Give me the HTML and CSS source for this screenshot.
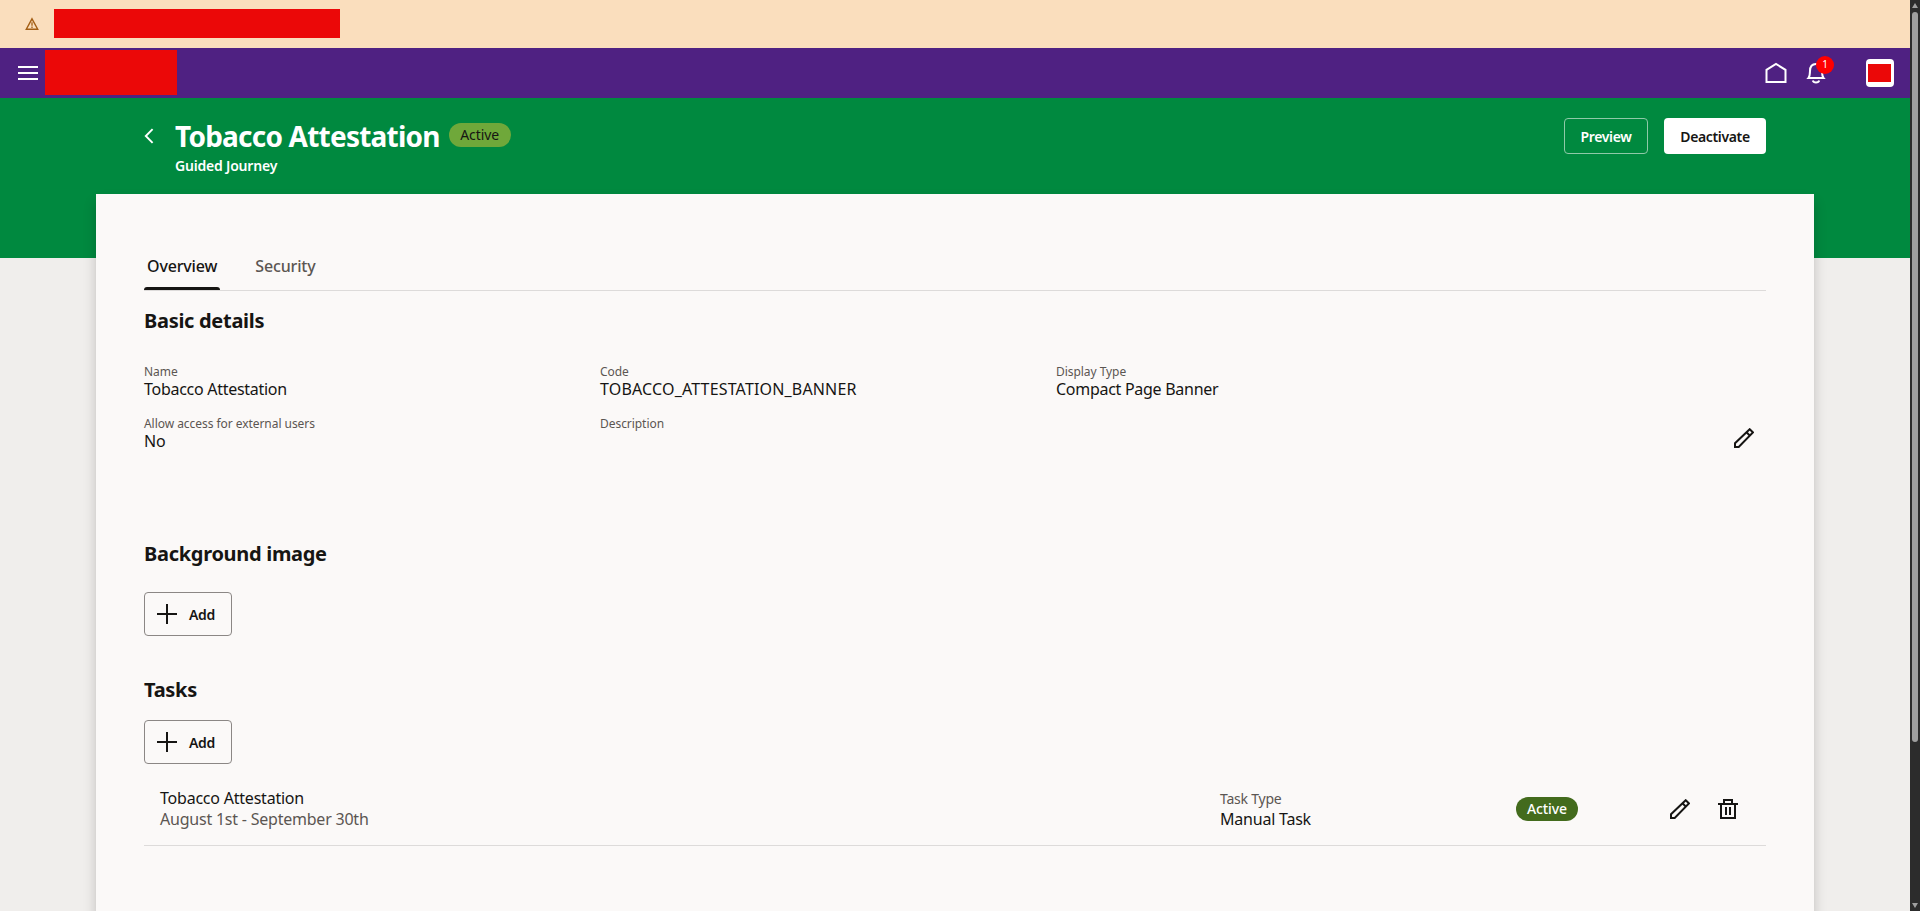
FILE: index.html
```html
<!DOCTYPE html>
<html lang="en">
<head>
  <meta charset="UTF-8" />
  <meta name="viewport" content="width=device-width, initial-scale=1.0"/>
  <title>Tobacco Attestation</title>
  <link rel="stylesheet" href="styles.css">
</head>
<body>

  <div class="app">
    <div class="alert-bar">
      <svg class="alert-icon" width="14" height="14" viewBox="0 0 14 14"><path d="M7 1.8L12.7 12.2H1.3z" fill="none" stroke="#a35e14" stroke-width="1.4"/><path d="M7 5.3v3.5M7 9.6v1.4" stroke="#a35e14" stroke-width="1.3"/></svg>
      <div class="alert-text"></div>
    </div>

    <div class="top-bar">
      <svg class="menu-icon" width="20" height="14" viewBox="0 0 20 14"><path d="M0 1h20M0 7h20M0 13h20" stroke="#fff" stroke-width="2"/></svg>
      <div class="brand"></div>
      <div class="top-actions">
        <svg width="22" height="22" viewBox="0 0 22 22"><path d="M1.500 20V7.800L11 2l9.500 5.800V20z" fill="none" stroke="#fff" stroke-width="2"/></svg>
        <div class="bell">
          <svg width="20" height="22" viewBox="0 0 20 22"><path d="M2.400 16C4 14 4 12 4 9c0-4.500 2.500-7 6-7s6 2.500 6 7c0 3 0 5 1.600 7z" fill="none" stroke="#fff" stroke-width="2"/><path d="M6.800 18.500c.8 2.700 5.600 2.700 6.400 0" fill="none" stroke="#fff" stroke-width="2"/></svg>
          <span class="count">1</span>
        </div>
        <div class="avatar"><div></div></div>
      </div>
    </div>

    <div class="page-header">
      <svg class="back" width="10" height="16" viewBox="0 0 10 16"><path d="M8.600 1.200L1.800 8l6.800 6.800" fill="none" stroke="#fff" stroke-width="1.900"/></svg>
      <div class="heading">
        <div class="title-row">
          <h1>Tobacco Attestation</h1>
          <span class="badge badge-light">Active</span>
        </div>
        <p class="subtitle">Guided Journey</p>
      </div>
      <div class="header-buttons">
        <button class="btn-outline">Preview</button>
        <button class="btn-solid">Deactivate</button>
      </div>
    </div>

    <div class="card">
      <div class="tabs">
        <div class="tab active">Overview</div>
        <div class="tab">Security</div>
      </div>

      <h2 class="details-title">Basic details</h2>
      <div class="details">
        <div class="field">
          <label>Name</label>
          <p>Tobacco Attestation</p>
        </div>
        <div class="field">
          <label>Code</label>
          <p class="code">TOBACCO_ATTESTATION_BANNER</p>
        </div>
        <div class="field">
          <label>Display Type</label>
          <p>Compact Page Banner</p>
        </div>
        <div class="field">
          <label>Allow access for external users</label>
          <p>No</p>
        </div>
        <div class="field">
          <label>Description</label>
          <p></p>
        </div>
        <div class="field edit">
          <svg width="20" height="20" viewBox="0 0 20 20"><path d="M1 19v-3.700L15.700 1.200l3.200 3.200L4.700 19zM12.500 4.300l3.200 3.200" fill="none" stroke="#161513" stroke-width="2"/></svg>
        </div>
      </div>

      <h2 class="image-title">Background image</h2>
      <button class="btn-add">
        <svg width="20" height="20" viewBox="0 0 20 20"><path d="M10 0v20M0 10h20" stroke="#161513" stroke-width="2"/></svg>
        Add
      </button>

      <h2 class="tasks-title">Tasks</h2>
      <button class="btn-add">
        <svg width="20" height="20" viewBox="0 0 20 20"><path d="M10 0v20M0 10h20" stroke="#161513" stroke-width="2"/></svg>
        Add
      </button>

      <div class="task">
        <div class="task-name">
          <p>Tobacco Attestation</p>
          <p class="muted">August 1st - September 30th</p>
        </div>
        <div class="task-type">
          <p class="muted small">Task Type</p>
          <p>Manual Task</p>
        </div>
        <span class="badge badge-dark">Active</span>
        <div class="task-actions">
          <svg width="20" height="20" viewBox="0 0 20 20"><path d="M1 19v-3.700L15.700 1.200l3.200 3.200L4.700 19zM12.500 4.300l3.200 3.200" fill="none" stroke="#161513" stroke-width="2"/></svg>
          <svg width="20" height="20" viewBox="0 0 20 20"><path d="M0 5h20M6 5V1h8v4M3 5v14h14V5M8 8v8M12 8v8" fill="none" stroke="#161513" stroke-width="2"/></svg>
        </div>
      </div>
    </div>
  </div>

  <div class="scrollbar">
    <svg width="6" height="5" viewBox="0 0 6 5"><path d="M3 0l3 5H0z" fill="#9f9f9f"/></svg>
    <div class="thumb"></div>
    <svg width="6" height="5" viewBox="0 0 6 5"><path d="M3 5l3-5H0z" fill="#9f9f9f"/></svg>
  </div>

</body>
</html>
```

FILE: styles.css
```css
* {
  box-sizing: border-box;
}

body {
  margin: 0;
  height: 911px;
  display: flex;
  overflow: hidden;
  background-color: #f0eeec;
  color: #161513;
  font-family: "Noto Sans", "Open Sans", sans-serif;
  font-size: 16px;
}

h1, h2, p {
  margin: 0;
}

svg {
  display: block;
  flex: none;
}

.app {
  flex: 1;
}

.alert-bar {
  display: flex;
  height: 48px;
  padding-left: 25px;
  background-color: #fadebd;
}

.alert-icon {
  margin-top: 17px;
}

.alert-text {
  width: 286px;
  height: 29px;
  margin: 9px 0 0 15px;
  background-color: #eb0808;
}

.top-bar {
  display: flex;
  align-items: center;
  height: 50px;
  padding: 0 16px 0 18px;
  background-color: #4f2182;
}

.brand {
  width: 132px;
  height: 45px;
  margin: 0 0 1px 7px;
  background-color: #eb0808;
}

.top-actions {
  display: flex;
  align-items: center;
  margin-left: auto;
}

.bell {
  position: relative;
  margin-left: 19px;
}

.count {
  position: absolute;
  left: 10px;
  top: -6px;
  width: 18px;
  height: 18px;
  border-radius: 50%;
  background-color: #f00;
  color: #fff;
  font-size: 10px;
  line-height: 17px;
  text-align: center;
}

.avatar {
  width: 28px;
  height: 28px;
  margin-left: 40px;
  padding: 5px 3px 5px 2px;
  border-radius: 4px;
  background-color: #fff;
}

.avatar div {
  height: 18px;
  background-color: #eb0808;
}

.page-header {
  display: flex;
  height: 160px;
  padding: 0 144px;
  background-color: #00893f;
  color: #fff;
}

.back {
  margin-top: 30px;
}

.heading {
  margin: 20px 0 0 21px;
}

.title-row {
  display: flex;
  align-items: center;
  gap: 9px;
}

h1 {
  font-size: 28px;
  font-weight: 700;
  line-height: 36px;
  letter-spacing: -0.78px;
}

.subtitle {
  font-size: 14px;
  font-weight: 600;
  line-height: 20px;
  letter-spacing: -0.2px;
  margin-top: 2px;
}

.badge {
  width: 62px;
  height: 24px;
  border-radius: 12px;
  font-size: 14px;
  line-height: 24px;
  letter-spacing: -0.1px;
  text-align: center;
}

.badge-light {
  margin-bottom: 2px;
  background-color: #6fa83a;
  color: #161513;
}

.badge-dark {
  background-color: #436b1d;
  color: #fff;
  font-weight: 500;
}

.header-buttons {
  display: flex;
  gap: 16px;
  margin: 20px 0 0 auto;
}

button {
  height: 36px;
  padding: 0;
  border-radius: 4px;
  font-family: inherit;
  font-size: 14px;
  font-weight: 600;
  letter-spacing: -0.35px;
  cursor: pointer;
}

.btn-outline {
  width: 84px;
  border: 1px solid #8fc9a8;
  background: none;
  color: #fff;
}

.btn-solid {
  width: 102px;
  border: none;
  background-color: #fff;
  color: #161513;
}

.card {
  width: 1718px;
  height: 720px;
  margin: -64px 96px 0;
  padding: 48px 48px 0;
  position: relative;
  background-color: #fbf9f8;
  box-shadow: 0 8px 12px rgba(0, 0, 0, 0.2);
}

.tabs {
  display: flex;
  gap: 32px;
  height: 49px;
  border-bottom: 1px solid #dddbda;
}

.tab {
  position: relative;
  height: 48px;
  padding: 0 3px;
  line-height: 49px;
  font-weight: 500;
  letter-spacing: -0.15px;
  color: #5b5652;
}

.tab.active {
  color: #161513;
}

.tab.active::after {
  content: "";
  position: absolute;
  left: 0;
  right: 0;
  bottom: 0;
  height: 3px;
  border-radius: 3px 3px 0 0;
  background-color: #161513;
}

h2 {
  font-size: 20px;
  font-weight: 700;
  line-height: 28px;
  letter-spacing: -0.3px;
}

.details-title {
  margin-top: 16px;
}

.details {
  display: grid;
  grid-template-columns: 456px 456px 1fr;
  row-gap: 18px;
  margin-top: 29px;
}

.field label {
  display: block;
  font-size: 12px;
  line-height: 16px;
  letter-spacing: -0.05px;
  color: #5b5652;
}

.field p {
  height: 18px;
  line-height: 18px;
  letter-spacing: -0.28px;
}

.field .code {
  letter-spacing: 0.17px;
}

.edit {
  display: flex;
  justify-content: flex-end;
  padding: 12px 12px 0 0;
}

.image-title {
  margin-top: 90px;
}

.btn-add {
  display: flex;
  align-items: center;
  gap: 12px;
  width: 88px;
  height: 44px;
  padding-left: 12px;
  border: 1px solid #8b8785;
  background: none;
  color: #161513;
}

.image-title + .btn-add {
  margin-top: 24px;
}

.tasks-title {
  margin-top: 40px;
}

.tasks-title + .btn-add {
  margin-top: 16px;
}

.task {
  display: flex;
  align-items: center;
  height: 82px;
  padding: 8px 28px 0 16px;
  border-bottom: 1px solid #dddbda;
}

.task p {
  line-height: 21px;
  letter-spacing: -0.22px;
}

.task-name {
  width: 1060px;
}

.task-type {
  width: 296px;
}

.muted {
  color: #5b5652;
}

.task .small {
  font-size: 14px;
}

.task-actions {
  display: flex;
  gap: 28px;
  margin-left: auto;
}

.scrollbar {
  display: flex;
  flex-direction: column;
  align-items: center;
  width: 10px;
  padding: 3px 0;
  background-color: #2c2c2c;
}

.thumb {
  width: 6px;
  height: 730px;
  margin: 4px 0 auto;
  border-radius: 3px;
  background-color: #9f9f9f;
}
```
